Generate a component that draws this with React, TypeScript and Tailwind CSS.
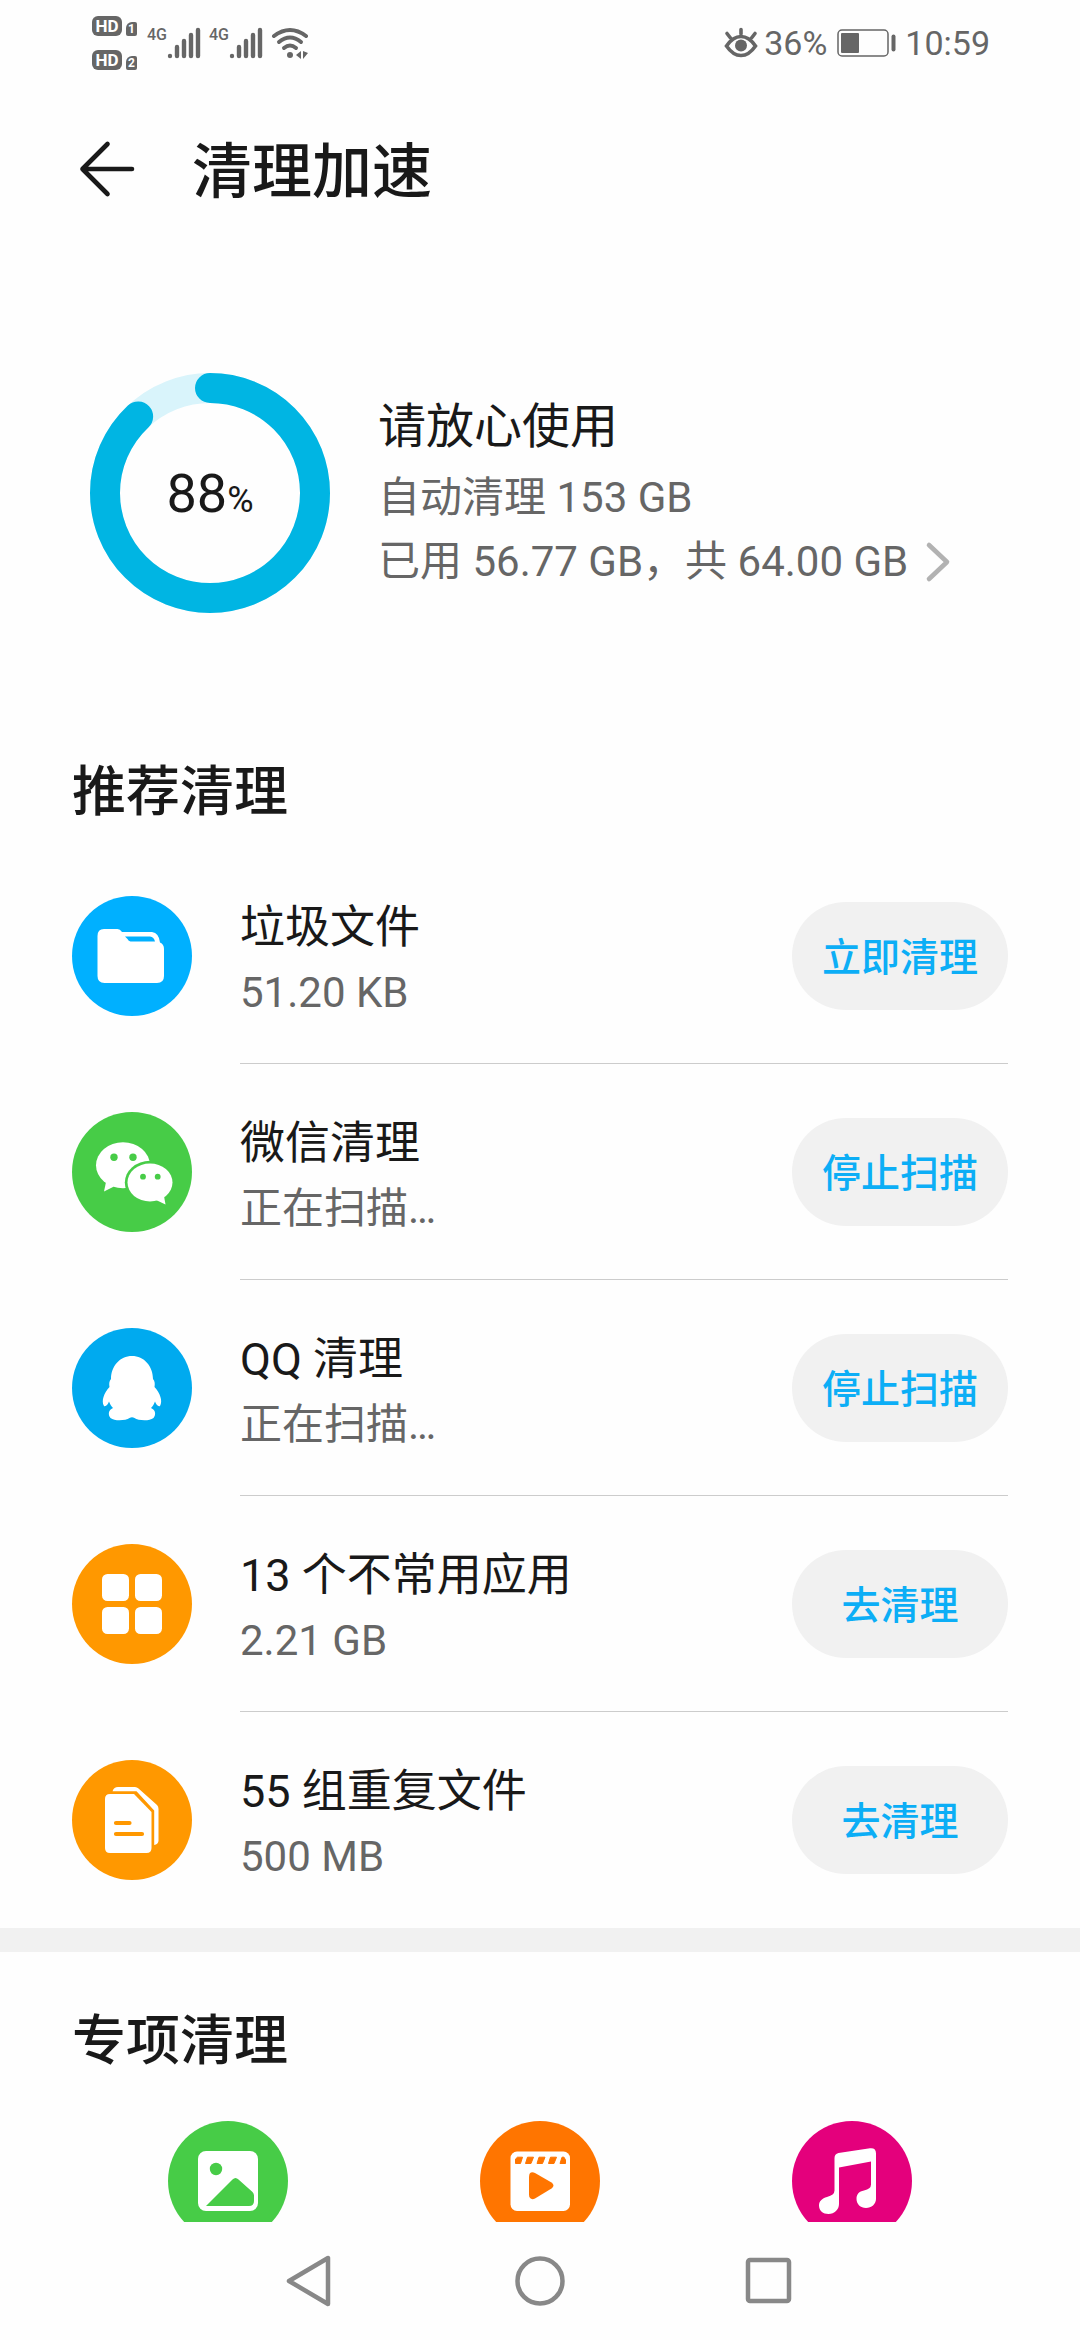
import type { ReactNode } from 'react'

interface CleanItem {
  id: string
  title: string
  detail: string
  action: string
  icon: ReactNode
}

const FolderIcon = () => (
  <svg viewBox="0 0 120 120" className="size-[120px] shrink-0" aria-hidden="true">
    <circle cx="60" cy="60" r="60" fill="#00b0ff" />
    <path
      fill="#fff"
      d="M32 33H45.500Q48 33 50 36H80Q87 37 88 46.500Q92 48 92 53V80Q92 87 85 87H32.500Q25.500 87 25.500 80V40Q25.500 33 32 33Z"
    />
    <path fill="#00b0ff" d="M53 40.500H78Q82 41 83 45.500H58.500Q56.500 45 55.500 43Z" />
  </svg>
)

const WechatIcon = () => (
  <svg viewBox="0 0 120 120" className="size-[120px] shrink-0" aria-hidden="true">
    <circle cx="60" cy="60" r="60" fill="#47cc47" />
    <ellipse cx="51" cy="53.300" rx="27" ry="23" fill="#fff" />
    <path fill="#fff" d="M34 70L32 79.500L41 75L44 70Z" />
    <ellipse cx="78" cy="70.500" rx="25.200" ry="21.700" fill="#47cc47" />
    <ellipse cx="78" cy="70.500" rx="22.500" ry="19" fill="#fff" />
    <path fill="#fff" d="M92 84L93.500 92.500L84 88Z" />
    <g fill="#47cc47">
      <circle cx="42" cy="45.300" r="3.700" />
      <circle cx="61" cy="45.300" r="3.700" />
      <circle cx="71" cy="64.700" r="2.900" />
      <circle cx="85.700" cy="64.700" r="2.900" />
    </g>
  </svg>
)

const QQIcon = () => (
  <svg viewBox="0 0 120 120" className="size-[120px] shrink-0" aria-hidden="true">
    <circle cx="60" cy="60" r="60" fill="#00aaef" />
    <path
      fill="#fff"
      d="M60 28C48 28 39 38 39 51C37 53 37 56 37.500 59C32 65 29 73 32 78C34 79 36 76 37 73.500C38 76 39 78 41 80C36 82 36 87 38.500 90C43 93.500 54 92.500 57.500 90Q60 88.500 62.500 90C66 92.500 77 93.500 81.500 90C84 87 84 82 79 80C81 78 82 76 83 73.500C84 76 86 79 88 78C91 73 88 65 82.500 59C83 56 83 53 81 51C81 38 72 28 60 28Z"
    />
  </svg>
)

const AppsIcon = () => (
  <svg viewBox="0 0 120 120" className="size-[120px] shrink-0" aria-hidden="true">
    <circle cx="60" cy="60" r="60" fill="#ff9800" />
    <g fill="#fff">
      <rect x="30" y="30" width="27" height="27" rx="5.500" />
      <rect x="63" y="30" width="27" height="27" rx="5.500" />
      <rect x="30" y="63" width="27" height="27" rx="5.500" />
      <rect x="63" y="63" width="27" height="27" rx="5.500" />
    </g>
  </svg>
)

const DuplicateIcon = () => (
  <svg viewBox="0 0 120 120" className="size-[120px] shrink-0" aria-hidden="true">
    <circle cx="60" cy="60" r="60" fill="#ff9800" />
    <path
      fill="#fff"
      d="M40.500 31.200Q42 27 46 27H63Q65 27 66.500 28.500L85 45Q86.500 46.500 86.500 49V81Q86 84.500 82.200 85V50.500L64.500 31.200Z"
    />
    <path
      fill="#fff"
      d="M38 34H62L79.500 52V88Q79.500 93 74.500 93H38Q33 93 33 88V39Q33 34 38 34Z"
    />
    <path d="M44 63H57.500M44 74H70" stroke="#ff9800" strokeWidth="4.200" strokeLinecap="round" />
  </svg>
)

const PhotoIcon = () => (
  <svg viewBox="0 0 120 120" className="size-[120px] shrink-0" aria-hidden="true">
    <circle cx="60" cy="60" r="60" fill="#47cc47" />
    <rect x="30" y="30" width="60" height="60" rx="8" fill="#fff" />
    <circle cx="48" cy="48" r="6.200" fill="#47cc47" />
    <path
      fill="#47cc47"
      d="M38 85L64.500 58.500Q67.500 55.500 70.500 58.500L84.500 71Q86 72.500 86 74.500V80Q86 85 81 85Z"
    />
  </svg>
)

const VideoIcon = () => (
  <svg viewBox="0 0 120 120" className="size-[120px] shrink-0" aria-hidden="true">
    <circle cx="60" cy="60" r="60" fill="#ff7500" />
    <rect x="30.500" y="30.500" width="59.500" height="59.500" rx="6.500" fill="#fff" />
    <g fill="#ff7500" stroke="#ff7500" strokeWidth="1" strokeLinejoin="round">
      <path d="M37.500 36.200H42.500L40.500 42.500H35.500V38Z" />
      <path d="M47.500 36.200H53.500L51 42.500H45.500Z" />
      <path d="M59 36.200H65L62.500 42.500H57Z" />
      <path d="M70.500 36.200H76.500L74 42.500H68.500Z" />
      <path d="M82 36.200H84L85.500 39V42.500H80Z" />
    </g>
    <path
      fill="#ff7500"
      d="M49 56C49 51 52 50.500 55 52L71.500 61.500Q75.500 64.500 71.500 67.500L55 77.500C52 79 49 78 49 73.500Z"
    />
  </svg>
)

const MusicIcon = () => (
  <svg viewBox="0 0 120 120" className="size-[120px] shrink-0" aria-hidden="true">
    <circle cx="60" cy="60" r="60" fill="#e4007c" />
    <path
      fill="#fff"
      d="M42.500 37Q42.500 33 46.500 32L78 27.200Q84 26.500 84 32.500V78C84 83 79.500 87 74 87C68.500 87 64.500 83 64.500 78C64.500 73 67 70.500 72 69.500Q79 68 79 63.500V40.500L47 46.500V83C47 88.500 42.500 93 36.500 93C31 93 27 89.500 27 84.500C27 80 30 77.500 35 76Q42.500 74 42.500 69.500Z"
    />
  </svg>
)

const CLEAN_ITEMS: CleanItem[] = [
  { id: 'junk', title: '垃圾文件', detail: '51.20 KB', action: '立即清理', icon: <FolderIcon /> },
  { id: 'wechat', title: '微信清理', detail: '正在扫描…', action: '停止扫描', icon: <WechatIcon /> },
  { id: 'qq', title: 'QQ 清理', detail: '正在扫描…', action: '停止扫描', icon: <QQIcon /> },
  { id: 'apps', title: '13 个不常用应用', detail: '2.21 GB', action: '去清理', icon: <AppsIcon /> },
  { id: 'duplicates', title: '55 组重复文件', detail: '500 MB', action: '去清理', icon: <DuplicateIcon /> },
]

const SPECIAL_ITEMS = [
  { id: 'photo', label: '图片', icon: <PhotoIcon /> },
  { id: 'video', label: '视频', icon: <VideoIcon /> },
  { id: 'music', label: '音频', icon: <MusicIcon /> },
]

function HdBadge({ sim }: { sim: number }) {
  return (
    <div className="flex items-end gap-1">
      <span className="flex h-5 w-[30px] items-center justify-center rounded-md bg-[#666] text-[17px] leading-5 font-bold text-white">
        HD
      </span>
      <span className="flex h-[14px] w-[11px] items-center justify-center rounded-xs rounded-tl-md bg-[#666] text-[12px] leading-[14px] font-bold text-white">
        {sim}
      </span>
    </div>
  )
}

function Signal() {
  return (
    <div className="flex items-start">
      <span className="text-[16px] leading-4 font-medium">4G</span>
      <svg viewBox="0 0 34 32" className="h-8 w-[34px]" aria-hidden="true">
        <path
          d="M3 29V29.100M10 20V29M17 14V29M24 8V29M31 3V29"
          stroke="#666"
          strokeWidth="4.400"
          strokeLinecap="round"
        />
      </svg>
    </div>
  )
}

function StatusBar() {
  return (
    <div className="flex h-[85px] shrink-0 items-center justify-between px-[90px] text-[#666]">
      <div className="flex items-center pl-[2px]">
        <div className="mr-[10px] flex flex-col gap-[14px]">
          <HdBadge sim={1} />
          <HdBadge sim={2} />
        </div>
        <div className="flex gap-2">
          <Signal />
          <Signal />
        </div>
        <svg viewBox="0 0 38 32" className="ml-2 h-8 w-[38px]" fill="none" stroke="#666" strokeWidth="4" strokeLinecap="round" aria-hidden="true">
          <path d="M3 9Q19 -3 35 9" />
          <path d="M8 15Q19 6 30 15" />
          <path d="M13 21Q19 16 25 21" />
          <circle cx="19" cy="28" r="3" fill="#666" stroke="none" />
          <path d="M25 28L30 24V32ZM32 24V32L37 26Z" fill="#666" stroke="none" />
        </svg>
      </div>
      <div className="flex items-center text-[34px] leading-10">
        <svg viewBox="0 0 34 32" className="mr-[6px] h-8 w-[34px]" fill="none" stroke="#666" strokeWidth="3.600" strokeLinecap="round" aria-hidden="true">
          <path d="M2.500 19Q9 9.500 17 9.500T31.500 19Q25 28.500 17 28.500T2.500 19Z" />
          <path d="M17 2.500V7M3 6.500L6.500 11M31 6.500L27.500 11" />
          <circle cx="17" cy="18.500" r="6" fill="#666" stroke="none" />
        </svg>
        <span>36%</span>
        <svg viewBox="0 0 60 28" className="mr-2 ml-[10px] h-7 w-[60px]" aria-hidden="true">
          <rect x="1" y="1" width="50" height="26" rx="4" fill="none" stroke="#666" strokeWidth="1.500" />
          <rect x="4" y="4" width="18" height="20" rx="1" fill="#666" />
          <rect x="54.500" y="5.500" width="4" height="17" rx="2" fill="#666" />
        </svg>
        <span>10:59</span>
      </div>
    </div>
  )
}

function UsageRing({ percent }: { percent: number }) {
  return (
    <div className="relative size-60 shrink-0">
      <svg viewBox="0 0 240 240" className="size-60 -rotate-90" fill="none" strokeWidth="30" aria-hidden="true">
        <circle cx="120" cy="120" r="105" stroke="#d9f4fb" />
        <circle
          cx="120"
          cy="120"
          r="105"
          stroke="#00b5e3"
          strokeLinecap="round"
          pathLength={100}
          strokeDasharray={`${percent} 100`}
        />
      </svg>
      <p className="absolute inset-0 flex items-center justify-center pt-2">
        <span className="text-[54px] leading-[60px]">
          {percent}
          <span className="text-[36px]">%</span>
        </span>
      </p>
    </div>
  )
}

export default function App() {
  return (
    <div className="flex h-screen flex-col bg-[#fefefe] font-[Roboto,'Noto_Sans_CJK_SC',sans-serif] text-[#191919]">
      <StatusBar />

      <header className="flex h-[168px] shrink-0 items-center gap-14 px-[78px]">
        <button type="button" aria-label="返回">
          <svg viewBox="0 0 58 58" className="size-[58px]" fill="none" stroke="#191919" strokeWidth="4.600" strokeLinecap="round" strokeLinejoin="round" aria-hidden="true">
            <path d="M29.500 4L4.500 29L29.500 54M4.500 29H54" />
          </svg>
        </button>
        <h1 className="pt-2 text-[60px] leading-[84px] font-medium">清理加速</h1>
      </header>

      <main className="min-h-0 flex-1 overflow-hidden">
        <section className="flex items-center gap-12 px-[90px] pt-[120px]">
          <UsageRing percent={88} />
          <div className="pb-1">
            <p className="text-[48px] leading-[78px]">请放心使用</p>
            <p className="text-[42px] leading-16 text-[#666]">自动清理 153 GB</p>
            <a href="#storage" className="flex items-center gap-4 text-[42px] leading-16 text-[#666]">
              已用 56.77 GB，共 64.00 GB
              <svg viewBox="0 0 28 42" className="h-[42px] w-7" fill="none" stroke="#b2b2b2" strokeWidth="4.600" strokeLinecap="round" strokeLinejoin="round" aria-hidden="true">
                <path d="M5 4L23 21L5 38" />
              </svg>
            </a>
          </div>
        </section>

        <section className="pt-36">
          <h2 className="mb-[19px] px-[72px] text-[54px] leading-[72px] font-medium">推荐清理</h2>
          <ul>
            {CLEAN_ITEMS.map((item) => (
              <li key={item.id} className="group flex items-center gap-12 px-[72px]">
                {item.icon}
                <div className="flex h-[216px] flex-1 items-center justify-between border-b border-[#ccc] group-last:border-transparent">
                  <div className="pt-2">
                    <p className="text-[45px] leading-[66px]">{item.title}</p>
                    <p className="text-[42px] leading-16 text-[#666]">{item.detail}</p>
                  </div>
                  <button
                    type="button"
                    className="h-[108px] w-[216px] rounded-full bg-[#f1f1f1] pt-1 text-[39px] leading-[56px] font-medium text-[#0caef6]"
                  >
                    {item.action}
                  </button>
                </div>
              </li>
            ))}
          </ul>
        </section>

        <section className="border-t-24 border-[#f1f1f1] pt-[54px]">
          <h2 className="mb-[43px] px-[72px] text-[54px] leading-[72px] font-medium">专项清理</h2>
          <div className="grid grid-cols-3 px-[72px]">
            {SPECIAL_ITEMS.map((item) => (
              <button key={item.id} type="button" aria-label={item.label} className="flex justify-center">
                {item.icon}
              </button>
            ))}
          </div>
        </section>
      </main>

      <nav className="flex h-[118px] shrink-0 items-center justify-center gap-[174px]">
        <button type="button" aria-label="后退">
          <svg viewBox="0 0 56 56" className="size-14" fill="none" stroke="#888" strokeWidth="4.500" strokeLinejoin="round" aria-hidden="true">
            <path d="M46 5V51L7 28Z" />
          </svg>
        </button>
        <button type="button" aria-label="主页">
          <svg viewBox="0 0 56 56" className="size-14" fill="none" stroke="#888" strokeWidth="4.500" aria-hidden="true">
            <circle cx="28" cy="28" r="22.500" />
          </svg>
        </button>
        <button type="button" aria-label="最近任务">
          <svg viewBox="0 0 56 56" className="size-14" fill="none" stroke="#888" strokeWidth="4.500" aria-hidden="true">
            <rect x="6" y="7" width="41" height="41" rx="2" />
          </svg>
        </button>
      </nav>
    </div>
  )
}
